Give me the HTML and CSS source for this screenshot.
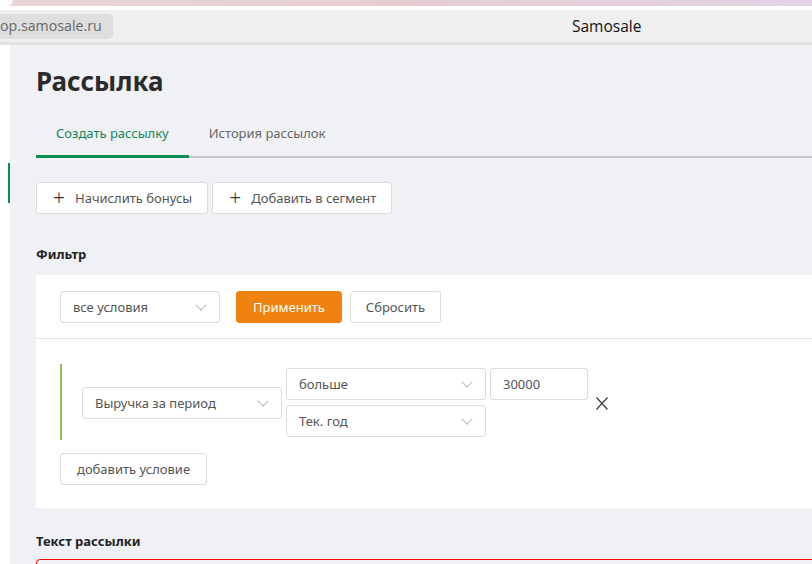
FILE: index.html
```html
<!DOCTYPE html>
<html lang="ru">
<head>
    <meta charset="UTF-8">
    <meta name="viewport" content="width=device-width, initial-scale=1.0">
    <title>Samosale</title>
    <link rel="stylesheet" href="styles.css">
</head>
<body>

<div class="top-strip"><span class="strip-corner"></span></div>
<div class="browser-bar">
    <span class="address">op.samosale.ru</span>
    <span class="page-title">Samosale</span>
</div>

<div class="app">
    <div class="sidebar">
        <div class="sidebar-marker"></div>
    </div>

    <div class="main">
        <h1>Рассылка</h1>

        <div class="tabs">
            <a class="tab active">Создать рассылку</a>
            <a class="tab">История рассылок</a>
        </div>

        <div class="actions">
            <button class="btn"><span class="plus">+</span>Начислить бонусы</button>
            <button class="btn"><span class="plus">+</span>Добавить в сегмент</button>
        </div>

        <h2>Фильтр</h2>
        <div class="panel">
            <div class="panel-head">
                <div class="select select-mode">все условия</div>
                <button class="btn btn-orange">Применить</button>
                <button class="btn btn-reset">Сбросить</button>
            </div>
            <div class="panel-body">
                <div class="condition">
                    <div class="select select-field">Выручка за период</div>
                    <div class="cond-stack">
                        <div class="select select-op">больше</div>
                        <div class="select select-op">Тек. год</div>
                    </div>
                    <div class="value-box">30000</div>
                    <span class="remove">
                        <svg width="12" height="13" viewBox="0 0 12 13"><path d="M0.5 0.5L11.5 12.5M11.5 0.5L0.5 12.5" stroke="#444" stroke-width="1.3" fill="none"/></svg>
                    </span>
                </div>
                <button class="btn btn-add">добавить условие</button>
            </div>
        </div>

        <h2 class="text-title">Текст рассылки</h2>
        <div class="message-box"></div>
    </div>
</div>

</body>
</html>
```

FILE: styles.css
```css
body {
    margin: 0;
    font-family: "Noto Sans", "Open Sans", sans-serif;
    color: #333;
    background-color: #fff;
    overflow: hidden;
    height: 564px;
}

.top-strip {
    height: 6px;
    background: linear-gradient(90deg, #ead6d6 0%, #e6cdd2 50%, #e2d3e4 100%);
    position: relative;
}

.strip-corner {
    position: absolute;
    left: 0;
    top: 0;
    width: 13px;
    height: 6px;
    background-color: #fff;
    border-bottom-right-radius: 6px;
}

.browser-bar {
    margin-top: 4px;
    height: 32px;
    background-color: #efefef;
    border-bottom: 3px solid #e2e2e2;
    display: flex;
    align-items: center;
    position: relative;
}

.address {
    margin-left: -12px;
    background-color: #dedede;
    color: #666;
    font-family: "Open Sans", sans-serif;
    font-size: 14.2px;
    line-height: 20px;
    padding: 2px 11px 3px 12px;
    border-radius: 5px;
}

.page-title {
    position: absolute;
    left: 572px;
    top: 5px;
    font-family: "Open Sans", sans-serif;
    font-size: 15.5px;
    color: #111;
}

.app {
    display: flex;
    height: 600px;
}

.sidebar {
    width: 10px;
    background-color: #fff;
}

.sidebar-marker {
    margin-top: 118px;
    margin-left: 8px;
    width: 3px;
    height: 40px;
    background-color: #0a8f4e;
}

.main {
    flex: 1;
    background-color: #f0f1f5;
    padding-left: 26px;
    min-width: 0;
}

h1 {
    font-size: 26px;
    font-weight: 700;
    color: #2b2b2b;
    margin: 18px 0 21px;
    line-height: 36px;
}

.tabs {
    display: flex;
    border-bottom: 2px solid #c4c4c4;
    height: 36px;
}

.tab {
    font-size: 13px;
    color: #666;
    padding: 0 20px;
    line-height: 26px;
}

.tab.active {
    color: #14875a;
    border-bottom: 3px solid #0a8f4e;
    margin-bottom: -2px;
}

.actions {
    display: flex;
    gap: 4px;
    margin-top: 24px;
}

.btn {
    font-family: "Noto Sans", "Open Sans", sans-serif;
    font-size: 13px;
    color: #555;
    background-color: #fff;
    border: 1px solid #dcdcdc;
    border-radius: 3px;
    height: 32px;
    padding: 0 15px;
    display: flex;
    align-items: center;
    cursor: pointer;
}

.actions .btn {
    padding: 0 15px 0 16px;
}

.plus {
    font-size: 21px;
    color: #333;
    margin-right: 10px;
    font-weight: 300;
    line-height: 1;
}

h2 {
    font-size: 13px;
    font-weight: 700;
    color: #222;
    margin: 31px 0 12px;
}

.panel {
    background-color: #fff;
    margin-right: -20px;
}

.panel-head {
    display: flex;
    align-items: center;
    gap: 8px;
    padding: 16px 24px 15px;
    border-bottom: 1px solid #e3e3e3;
}

.select {
    position: relative;
    box-sizing: border-box;
    height: 32px;
    border: 1px solid #dcdcdc;
    border-radius: 3px;
    background-color: #fff;
    font-size: 13px;
    color: #555;
    padding: 0 12px;
    display: flex;
    align-items: center;
}

.select::after {
    content: "";
    position: absolute;
    right: 14px;
    top: 9px;
    width: 7px;
    height: 7px;
    border-right: 1px solid #bbb;
    border-bottom: 1px solid #bbb;
    transform: rotate(45deg);
}

.select-mode {
    width: 160px;
    margin-right: 8px;
}

.btn-orange {
    background-color: #f0820f;
    border-color: #f0820f;
    color: #fff;
    padding: 0 16px;
}

.btn-reset {
    padding: 0 15px;
}

.panel-body {
    padding: 25px 24px 23px;
}

.condition {
    display: flex;
    align-items: center;
    gap: 4px;
    border-left: 2px solid #8cc152;
    padding: 4px 0 3px 20px;
}

.select-field {
    width: 200px;
}

.cond-stack {
    display: flex;
    flex-direction: column;
    gap: 5px;
}

.select-op {
    width: 200px;
}

.value-box {
    box-sizing: border-box;
    width: 98px;
    height: 32px;
    border: 1px solid #dcdcdc;
    border-radius: 3px;
    font-size: 13px;
    color: #555;
    padding: 0 12px;
    display: flex;
    align-items: center;
    align-self: flex-start;
}

.remove {
    margin-left: 4px;
    margin-top: 2px;
    display: flex;
}

.btn-add {
    margin-top: 13px;
    padding: 0 16px;
}

.text-title {
    margin: 24px 0 9px;
}

.message-box {
    height: 40px;
    border: 1px solid #f00;
    border-radius: 4px;
    margin-right: -20px;
}
```
